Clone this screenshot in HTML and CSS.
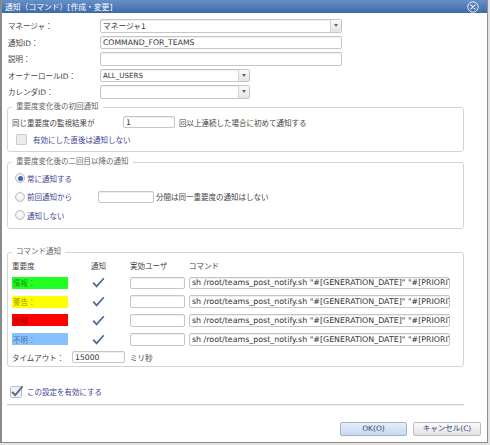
FILE: index.html
```html
<!DOCTYPE html>
<html lang="ja">
<head>
<meta charset="utf-8">
<title>通知（コマンド）[作成・変更]</title>
<link rel="stylesheet" href="styles.css">
</head>
<body>
<div class="dialog">
  <div class="titlebar">
    <span class="title">通知（コマンド）[作成・変更]</span>
    <svg class="close" width="12" height="12" viewBox="0 0 12 12"><circle cx="6" cy="6" r="5.2" fill="none" stroke="#e6eef8" stroke-width="1"/><path d="M3.8 3.8 L8.2 8.2 M8.2 3.8 L3.8 8.2" stroke="#e6eef8" stroke-width="1.2" stroke-linecap="round"/></svg>
  </div>
  <div class="body">
    <div class="form">
      <div class="row"><span class="lbl">マネージャ：</span><div class="select w-long"><span class="val">マネージャ1</span><span class="arrow"></span></div></div>
      <div class="row"><span class="lbl">通知ID：</span><div class="input w-long"><span class="val">COMMAND_FOR_TEAMS</span></div></div>
      <div class="row"><span class="lbl">説明：</span><div class="input w-long"></div></div>
      <div class="row"><span class="lbl">オーナーロールID：</span><div class="select w-mid"><span class="val small">ALL_USERS</span><span class="arrow"></span></div></div>
      <div class="row"><span class="lbl">カレンダID：</span><div class="select w-mid"><span class="val"></span><span class="arrow"></span></div></div>
    </div>

    <fieldset class="group g1">
      <legend>重要度変化後の初回通知</legend>
      <div class="line l1"><span class="l1-lbl">同じ重要度の監視結果が</span><div class="input w-count"><span class="val">1</span></div><span class="after">回以上連続した場合に初めて通知する</span></div>
      <div class="line l2"><span class="cb-disabled"></span><span class="opt">有効にした直後は通知しない</span></div>
    </fieldset>

    <fieldset class="group g2">
      <legend>重要度変化後の二回目以降の通知</legend>
      <div class="rline"><span class="radio on"></span><span class="opt">常に通知する</span></div>
      <div class="rline"><span class="radio"></span><span class="opt r-lbl">前回通知から</span><div class="input w-min"></div><span class="after">分間は同一重要度の通知はしない</span></div>
      <div class="rline"><span class="radio"></span><span class="opt">通知しない</span></div>
    </fieldset>

    <fieldset class="group g3">
      <legend>コマンド通知</legend>
      <div class="thead"><span>重要度</span><span class="c2">通知</span><span>実効ユーザ</span><span>コマンド</span></div>
      <div class="trow"><span class="sev info">情報：</span><span class="c2"><svg class="check" width="13" height="11" viewBox="0 0 13 11"><path d="M1.2 5.6 L4.6 9.4 L11.8 1.2" fill="none" stroke="#4d6b94" stroke-width="1.7"/></svg></span><div class="input w-user"></div><div class="input w-cmd"><span class="val cmd">sh /root/teams_post_notify.sh "#[GENERATION_DATE]" "#[PRIORITY]"</span></div></div>
      <div class="trow"><span class="sev warn">警告：</span><span class="c2"><svg class="check" width="13" height="11" viewBox="0 0 13 11"><path d="M1.2 5.6 L4.6 9.4 L11.8 1.2" fill="none" stroke="#4d6b94" stroke-width="1.7"/></svg></span><div class="input w-user"></div><div class="input w-cmd"><span class="val cmd">sh /root/teams_post_notify.sh "#[GENERATION_DATE]" "#[PRIORITY]"</span></div></div>
      <div class="trow"><span class="sev crit">危険：</span><span class="c2"><svg class="check" width="13" height="11" viewBox="0 0 13 11"><path d="M1.2 5.6 L4.6 9.4 L11.8 1.2" fill="none" stroke="#4d6b94" stroke-width="1.7"/></svg></span><div class="input w-user"></div><div class="input w-cmd"><span class="val cmd">sh /root/teams_post_notify.sh "#[GENERATION_DATE]" "#[PRIORITY]"</span></div></div>
      <div class="trow"><span class="sev unknown">不明：</span><span class="c2"><svg class="check" width="13" height="11" viewBox="0 0 13 11"><path d="M1.2 5.6 L4.6 9.4 L11.8 1.2" fill="none" stroke="#4d6b94" stroke-width="1.7"/></svg></span><div class="input w-user"></div><div class="input w-cmd"><span class="val cmd">sh /root/teams_post_notify.sh "#[GENERATION_DATE]" "#[PRIORITY]"</span></div></div>
      <div class="tline"><span class="to-lbl">タイムアウト：</span><div class="input w-to"><span class="val">15000</span></div><span class="after2">ミリ秒</span></div>
    </fieldset>

    <div class="enable"><svg class="cb" width="14" height="13" viewBox="0 0 14 13"><rect x="0.5" y="1.5" width="11" height="11" rx="1" fill="#f2f2f2" stroke="#bdbdbd"/><path d="M2 6.8 L5.2 10.2 L12.6 1.4" fill="none" stroke="#4d6b94" stroke-width="1.8"/></svg><span class="opt">この設定を有効にする</span></div>
    <div class="sep"></div>
  </div>
  <div class="footer">
    <button class="btn ok">OK(O)</button>
    <button class="btn cancel">キャンセル(C)</button>
  </div>
</div>
</body>
</html>
```
FILE: styles.css
```css
* { box-sizing: border-box; }
html, body { margin: 0; padding: 0; }
body {
  width: 490px;
  height: 445px;
  overflow: hidden;
  background: #e2e2e2;
  font-family: "DejaVu Sans", "Noto Sans CJK JP", sans-serif;
  font-size: 7.5px;
  color: #444;
}
.dialog {
  width: 488px;
  height: 443px;
  background: #fff;
  border: 1px solid #8e8e8e;
  border-top: 0;
  border-left: 2px solid #8a8a8a;
  display: flex;
  flex-direction: column;
}
.titlebar {
  height: 13px;
  flex: none;
  background: linear-gradient(#6690c8, #3d6aa8);
  display: flex;
  align-items: center;
  padding-left: 3px;
  color: #fff;
  font-size: 7.8px;
}
.title { white-space: nowrap; }
.close { margin-left: auto; margin-right: 8px; display: block; }

.body { padding-left: 5px; flex: none; }

.form { padding-top: 4.5px; padding-left: 1px; }
.row { height: 16.5px; display: flex; align-items: center; }
.lbl { width: 92px; white-space: nowrap; color: #444; }

.input, .select {
  height: 13.5px;
  border: 1px solid #c6c6c6;
  border-radius: 2px;
  background: #fff;
  box-shadow: inset 0 1px 1px rgba(0,0,0,0.07);
  display: flex;
  align-items: center;
  overflow: hidden;
  color: #333;
}
.val { padding-left: 2px; white-space: nowrap; flex: 1; overflow: hidden; font-size: 7.7px; }
.val.small { font-size: 7.1px; }
.val.cmd { font-size: 7.9px; }
.select .arrow {
  width: 11px;
  height: 100%;
  flex: none;
  border-left: 1px solid #d2d2d2;
  background: linear-gradient(#fbfbfb, #e4e4e4);
  display: flex;
  align-items: center;
  justify-content: center;
}
.select .arrow::after {
  content: "";
  border-left: 2.5px solid transparent;
  border-right: 2.5px solid transparent;
  border-top: 3px solid #666;
}
.w-long { width: 242px; }
.w-mid { width: 150px; }

.group {
  width: 457px;
  margin: 0;
  border: 1px solid #d4d4d4;
  border-radius: 3px;
  padding: 0 4px;
}
.group legend {
  padding: 0 4px;
  line-height: 10px;
  color: #666;
  white-space: nowrap;
}
.g1 { margin-top: 2px; padding-top: 3px; padding-bottom: 5px; }
.line { height: 14px; display: flex; align-items: center; }
.l2 { margin-top: 3px; padding-left: 4px; }
.l1-lbl { width: 111px; white-space: nowrap; }
.w-count { width: 52px; height: 12px; }
.after { margin-left: 4px; white-space: nowrap; }
.cb-disabled {
  width: 11px;
  height: 11px;
  border: 1px solid #cdcdcd;
  border-radius: 1px;
  background: #ececec;
  flex: none;
}
.l2 .opt { margin-left: 6px; }
.opt { color: #3f3f92; white-space: nowrap; }

.g2 { margin-top: 5px; padding-top: 2px; padding-bottom: 3px; }
.rline { height: 18.5px; display: flex; align-items: center; padding-left: 3px; }
.radio {
  width: 10px;
  height: 10px;
  border-radius: 50%;
  border: 1px solid #bdbdbd;
  background: radial-gradient(circle at 50% 40%, #ffffff, #e4e4e4);
  flex: none;
  display: flex;
  align-items: center;
  justify-content: center;
}
.radio.on::after {
  content: "";
  width: 5px;
  height: 5px;
  border-radius: 50%;
  background: #3867b2;
}
.rline .opt { margin-left: 2px; }
.r-lbl { width: 71px; }
.w-min { width: 56px; height: 12.5px; }
.rline .after { margin-left: 2px; }

.g3 { margin-top: 18.5px; padding-top: 2px; padding-bottom: 1.5px; }
.thead, .trow { display: grid; grid-template-columns: 56px 62px 59px 261px; align-items: center; }
.thead { height: 12px; color: #444; }
.thead span { white-space: nowrap; }
.c2 { padding-left: 24px; display: flex; align-items: center; }
.thead .c2 { padding-left: 23px; }
.trow { height: 18.8px; }
.thead + .trow { margin-top: 2.5px; }
.sev {
  height: 12px;
  padding-left: 1px;
  display: flex;
  align-items: center;
  color: rgba(0,0,0,0.45);
}
.info { background: #22ff22; }
.warn { background: #ffff00; }
.crit { background: #ff0000; }
.unknown { background: #86c2ff; }
.check { display: block; }
.w-user { width: 55px; height: 12.5px; }
.w-cmd { width: 261px; height: 12.5px; }
.tline { height: 14px; margin-top: 1.8px; display: flex; align-items: center; }
.to-lbl { width: 60px; white-space: nowrap; }
.w-to { width: 53px; height: 12px; }
.after2 { margin-left: 5px; }

.enable { height: 14px; margin-top: 18px; padding-left: 3px; display: flex; align-items: center; }
.cb { display: block; flex: none; }
.enable .opt { margin-left: 3px; }
.sep {
  width: 457px;
  margin-top: 5px;
  border-top: 1px solid #cfcfcf;
  border-bottom: 1px solid #ededed;
}

.footer {
  margin-top: 16px;
  padding-right: 6px;
  display: flex;
  justify-content: flex-end;
  gap: 6px;
}
.btn {
  height: 14px;
  width: 67px;
  padding: 0;
  border-radius: 2px;
  font-family: inherit;
  font-size: 7.5px;
  color: #35457a;
  line-height: 12px;
}
.ok {
  border: 1px solid #9fb3cc;
  background: linear-gradient(#e6eef8, #c9d9ee);
}
.cancel {
  width: 68px;
  border: 1px solid #bcbcbc;
  background: linear-gradient(#fbfbfb, #e2e2e2);
}
```
